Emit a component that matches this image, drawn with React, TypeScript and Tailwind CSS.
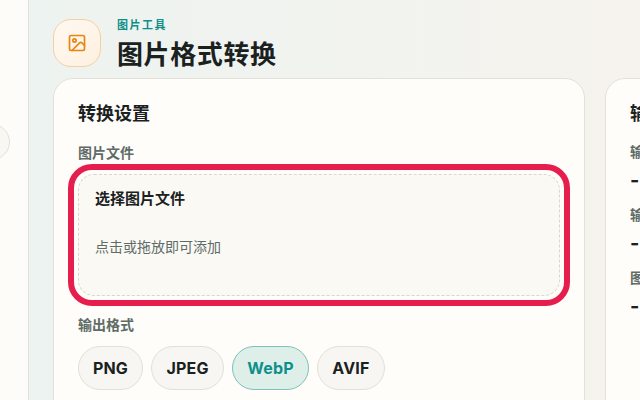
import { ImageIcon } from "lucide-react"

const cjk = "font-['Inter','Noto_Sans_CJK_SC',sans-serif]"

const formats = [
  { label: "PNG", width: "w-[65px]" },
  { label: "JPEG", width: "w-[73px]" },
  { label: "WebP", width: "w-[77px]", active: true },
  { label: "AVIF", width: "w-[68px]" },
]

const stats = ["输出格式", "输出大小", "图片尺寸"]

const App = () => {
  return (
    <div className={`flex h-[400px] w-[640px] overflow-hidden bg-[#fdfcf8] ${cjk}`}>
      <aside className="w-[29px] shrink-0 overflow-hidden border-r border-[#e2e0d8] bg-[#fdfcf8]">
        <div className="mt-[124px] ml-[-26px] h-9 w-9 rounded-full border border-[#e2e0d8] bg-[#f8f7f2]" />
      </aside>

      <main className="min-w-0 flex-1 bg-gradient-to-r from-[#edf3f0] to-[#f6f3ee] pt-[19px] pl-6">
        <header className="flex items-start gap-4">
          <div className="flex h-12 w-12 shrink-0 items-center justify-center rounded-[18px] border border-[#f6cfa0] bg-gradient-to-br from-[#fff9f2] to-[#fef0e0] text-[#e8850c]">
            <ImageIcon size={20} strokeWidth={2} />
          </div>
          <div className="pt-px">
            <p className="text-[11px] leading-[11px] font-bold tracking-[1.5px] text-[#0f8f8a]">图片工具</p>
            <h1 className="mt-[7px] text-[26px] leading-[34px] font-bold tracking-[0.6px] text-[#1a211f]">图片格式转换</h1>
          </div>
        </header>

        <div className="mt-[6px] flex items-start gap-5">
          <section className="h-[400px] w-[532px] shrink-0 rounded-[20px] border border-[#e4e1d8] bg-[#fefdf9] px-6 pt-[23px]">
            <h2 className="text-[18px] leading-6 font-bold text-[#1a211f]">转换设置</h2>
            <p className="mt-[17px] text-sm leading-[20px] font-semibold text-[#5f6b67]">图片文件</p>

            <div className="relative mt-[11px] h-[122px] rounded-2xl border border-dashed border-[#d8d6cd] bg-[#faf9f4] px-4 pt-[13px]">
              <p className="text-[15px] leading-[22px] font-semibold text-[#1a211f]">选择图片文件</p>
              <p className="mt-[27px] text-sm leading-5 text-[#5f6b67]">点击或拖放即可添加</p>
              <div className="pointer-events-none absolute -inset-[11px] rounded-[24px] border-[6px] border-[#e61e4d]" />
            </div>

            <p className="mt-[19px] text-sm leading-5 font-semibold text-[#5f6b67]">输出格式</p>
            <div className="mt-[11px] flex gap-2">
              {formats.map((format) => (
                <button
                  key={format.label}
                  className={`h-11 rounded-[22px] border text-base font-bold tracking-[0.2px] ${format.width} ${
                    format.active
                      ? "border-[#7fc0bb] bg-[#deefea] text-[#0f8f8a]"
                      : "border-[#e2e0d8] bg-[#f7f6f2] text-[#1a211f]"
                  }`}
                >
                  {format.label}
                </button>
              ))}
            </div>
          </section>

          <section className="h-[400px] w-[300px] shrink-0 rounded-[20px] border border-[#e4e1d8] bg-[#fefdf9] px-6 pt-[23px]">
            <h2 className="text-[18px] leading-6 font-bold text-[#1a211f]">输出结果</h2>
            <div className="mt-4 flex flex-col gap-[15px]">
              {stats.map((stat) => (
                <div key={stat}>
                  <p className="text-sm leading-5 font-semibold text-[#5f6b67]">{stat}</p>
                  <p className="mt-2 text-xl leading-5 font-bold text-[#1a211f]">-</p>
                </div>
              ))}
            </div>
          </section>
        </div>
      </main>
    </div>
  )
}

export default App
